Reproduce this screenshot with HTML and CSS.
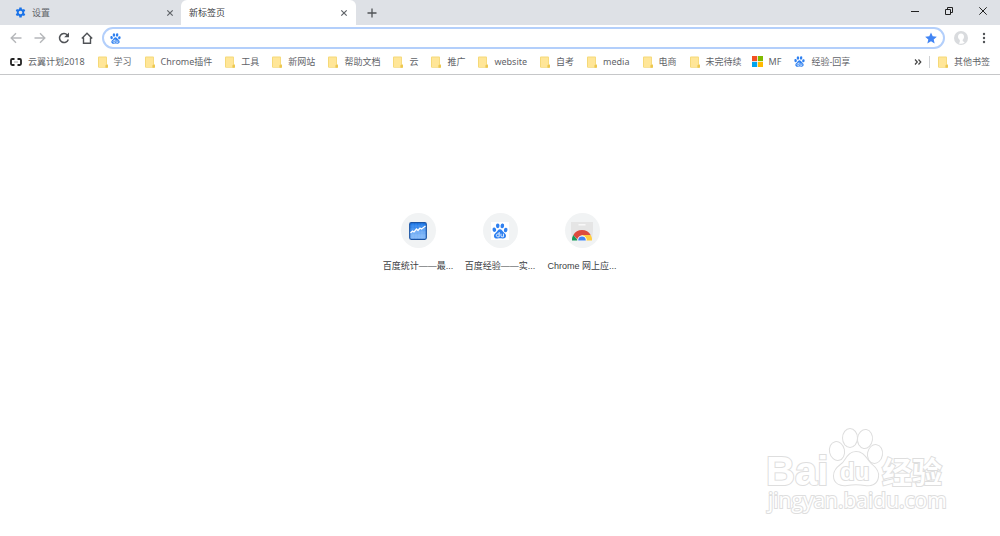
FILE: index.html
```html
<!DOCTYPE html>
<html lang="zh-CN">
<head>
<meta charset="utf-8">
<title>新标签页</title>
<link rel="stylesheet" href="styles.css">
</head>
<body>
<svg class="defs" aria-hidden="true">
  <symbol id="folder" viewBox="0 0 10 12"><path fill="#f5d978" d="M1 .5h7a1 1 0 0 1 1 1V8l1 1v2a.8.8 0 0 1-.8.8H1a1 1 0 0 1-1-1V1.500a1 1 0 0 1 1-1z"/><path fill="#ffe698" d="M1 1.500h7.200v7L7.500 9v2H1z"/><path fill="#edc750" d="M7.500 9.500 9 8.500l1 1v1.500a.8.8 0 0 1-.8.8H7.500z"/></symbol>
  <symbol id="paw" viewBox="0 0 24 24"><g fill="#2f80f0"><ellipse cx="3.500" cy="10" rx="2.700" ry="3.400" transform="rotate(-15 3.500 10)"/><ellipse cx="8.600" cy="4.300" rx="2.700" ry="3.700"/><ellipse cx="15.500" cy="4.300" rx="2.700" ry="3.700" transform="rotate(10 15.500 4.300)"/><ellipse cx="20.500" cy="10.500" rx="2.700" ry="3.400" transform="rotate(12 20.500 10.500)"/><path d="M12 9.500c2.600 0 3.500 2.600 5.400 4.400 1.800 1.700 3.800 3 3.600 5.700-.3 3-2.800 4-5.300 3.700-2.500-.4-4.700-.4-7.200 0C6 23.800 3 22.800 2.900 19.500c-.1-2.600 2-3.700 3.700-5.500C8.500 12 9.200 9.500 12 9.500z"/></g><path fill="none" stroke="#fff" stroke-width="1.300" d="M10.800 13.500v7.300H8.600c-2.800 0-2.800-4.400 0-4.400h2.200M13.500 16v3.300c0 1 .5 1.500 1.500 1.500h2.200V16"/></symbol>
  <symbol id="cross" viewBox="0 0 8 8"><path fill="none" stroke="#5f6368" stroke-width="1.200" d="m1.300 1.300 5.400 5.400m0-5.400L1.300 6.700"/></symbol>
</svg>

<header>
  <div class="tabstrip">
    <div class="tab">
      <svg class="tab-icon" viewBox="0 0 24 24"><path fill="#1a73e8" fill-rule="evenodd" d="m9.500 1-.5 3.200-1.900 1.100-3-1.200L1.600 8.400l2.500 2v3.200l-2.500 2 2.500 4.300 3-1.200L9 19.800l.5 3.200h5l.5-3.200 1.900-1.100 3 1.200 2.500-4.300-2.500-2v-3.200l2.500-2-2.500-4.300-3 1.200L15 4.200 14.500 1zM12 8a4 4 0 1 1 0 8 4 4 0 0 1 0-8z"/></svg>
      <span class="tab-title">设置</span>
      <button class="tab-close" aria-label="关闭标签页"><svg><use href="#cross"/></svg></button>
    </div>
    <div class="tab active">
      <span class="tab-title">新标签页</span>
      <button class="tab-close" aria-label="关闭标签页"><svg><use href="#cross"/></svg></button>
    </div>
    <button class="new-tab" aria-label="新建标签页"><svg viewBox="0 0 10 10"><path fill="none" stroke="#505357" stroke-width="1.300" d="M5 .5v9M.5 5h9"/></svg></button>
    <div class="window-controls">
      <button aria-label="最小化"><svg viewBox="0 0 8 8"><path stroke="#222" d="M0 4.500h8"/></svg></button>
      <button aria-label="还原"><svg viewBox="0 0 8 8"><path fill="none" stroke="#222" d="M.5 2.500h5v5h-5zM2.500 2V.5h5v5H6"/></svg></button>
      <button aria-label="关闭"><svg viewBox="0 0 8 8"><path stroke="#222" d="m.3.300 7.400 7.400m0-7.400L.3 7.700"/></svg></button>
    </div>
  </div>

  <div class="toolbar">
    <button class="tool" aria-label="后退"><svg viewBox="0 0 12 12"><path fill="none" stroke="#b5b7ba" stroke-width="1.400" d="M11.500 6H1.500M6 1.200 1.200 6 6 10.800"/></svg></button>
    <button class="tool" aria-label="前进"><svg viewBox="0 0 12 12"><path fill="none" stroke="#b5b7ba" stroke-width="1.400" d="M.5 6h10M6 1.200 10.800 6 6 10.800"/></svg></button>
    <button class="tool" aria-label="重新加载"><svg viewBox="0 0 12 12"><path fill="none" stroke="#505357" stroke-width="1.500" d="M10.300 7.500A4.500 4.500 0 1 1 9.300 2.900"/><path fill="#505357" d="M11 .5v4.800H6.200z"/></svg></button>
    <button class="tool" aria-label="主页"><svg viewBox="0 0 12 12"><path fill="none" stroke="#505357" stroke-width="1.400" d="M.8 6.500 6 1.300l5.200 5.200M2.500 5.500v5.800h7V5.500"/></svg></button>
    <form class="omnibox">
      <svg class="engine"><use href="#paw"/></svg>
      <input type="text" aria-label="地址和搜索栏">
      <button type="button" class="star" aria-label="修改书签"><svg viewBox="0 0 24 24"><path fill="#4285f4" d="m12 .8 3.400 7.700 8.300.8-6.300 5.500 1.900 8.200-7.300-4.300L4.700 23l1.900-8.200L.3 9.300l8.300-.8z"/></svg></button>
    </form>
    <button class="avatar" aria-label="用户"><svg viewBox="0 0 14 14"><circle cx="7" cy="7" r="7" fill="#d9dbde"/><path fill="#fff" d="M7 2.500c2 0 3 1.500 3 3.300 0 1.400-.6 2.300-1.300 3v1.300l2 1.300A6 6 0 0 1 7 12.800a6 6 0 0 1-2-.4l.8-1.600V8.900C4.700 8.300 4 7.200 4 5.800 4 4 5 2.500 7 2.500z"/></svg></button>
    <button class="menu" aria-label="菜单"><svg viewBox="0 0 4 12"><g fill="#505357"><circle cx="2" cy="2" r="1.200"/><circle cx="2" cy="6" r="1.200"/><circle cx="2" cy="10" r="1.200"/></g></svg></button>
  </div>

  <nav class="bookmarks" aria-label="书签栏">
    <a href="#"><svg class="link-icon" viewBox="0 0 12 8"><path fill="none" stroke="#222" stroke-width="1.800" d="M4.500 1H2.200Q1 1 1 2.200v3.600Q1 7 2.200 7h2.300M7.500 1h2.300Q11 1 11 2.200v3.600Q11 7 9.800 7H7.500"/><path stroke="#555" d="M4.500 4h1m1 0h1"/></svg>云翼计划2018</a>
    <a href="#"><svg><use href="#folder"/></svg>学习</a>
    <a href="#"><svg><use href="#folder"/></svg>Chrome插件</a>
    <a href="#"><svg><use href="#folder"/></svg>工具</a>
    <a href="#"><svg><use href="#folder"/></svg>新网站</a>
    <a href="#"><svg><use href="#folder"/></svg>帮助文档</a>
    <a href="#"><svg><use href="#folder"/></svg>云</a>
    <a href="#"><svg><use href="#folder"/></svg>推广</a>
    <a href="#"><svg><use href="#folder"/></svg>website</a>
    <a href="#"><svg><use href="#folder"/></svg>自考</a>
    <a href="#"><svg><use href="#folder"/></svg>media</a>
    <a href="#"><svg><use href="#folder"/></svg>电商</a>
    <a href="#" class="tight"><svg><use href="#folder"/></svg>未完待续</a>
    <a href="#"><svg class="wide-icon" viewBox="0 0 12 12"><path fill="#f25022" d="M0 0h5.600v5.600H0z"/><path fill="#7fba00" d="M6.400 0H12v5.600H6.400z"/><path fill="#00a4ef" d="M0 6.400h5.600V12H0z"/><path fill="#ffb900" d="M6.400 6.400H12V12H6.400z"/></svg>MF</a>
    <a href="#"><svg class="wide-icon"><use href="#paw"/></svg>经验-回享</a>
    <button class="more" aria-label="更多书签"><svg viewBox="0 0 8 6"><path fill="none" stroke="#444" stroke-width="1.200" d="m1 .5 2.300 2.500L1 5.500m3.500-5L6.800 3 4.500 5.500"/></svg></button>
    <a href="#" class="other"><svg><use href="#folder"/></svg>其他书签</a>
  </nav>
</header>

<main>
  <a class="tile" href="#">
    <span class="disc"><svg viewBox="0 0 18 18"><defs><linearGradient id="sky" x2="0" y2="1"><stop stop-color="#1976e8"/><stop offset="1" stop-color="#7ab5fa"/></linearGradient></defs><rect x=".7" y=".7" width="16.600" height="16.600" rx="1.500" fill="url(#sky)" stroke="#1c55a5" stroke-width="1.200"/><path stroke="#fff" stroke-opacity=".2" stroke-width=".5" d="M4 1v16M7 1v16M10 1v16M13 1v16M1 4h16M1 7h16M1 10h16M1 13h16"/><path fill="#fff" fill-opacity=".15" d="m1.500 11 2-2L5 10l2.500-3L9 8.500 11 6l1.500 1 4-3v12.500h-15z"/><path fill="none" stroke="#fff" stroke-width="1.300" d="m1.500 11 2-2L5 10l2.500-3L9 8.500 11 6l1.500 1 4-3"/></svg></span>
    <span class="label">百度统计——最...</span>
  </a>
  <a class="tile" href="#">
    <span class="disc"><svg viewBox="0 0 18 18"><path fill="#fff" d="M0 0h18v18H0z"/><use href="#paw" x="1" y="1" width="16" height="16"/></svg></span>
    <span class="label">百度经验——实...</span>
  </a>
  <a class="tile" href="#">
    <span class="disc"><svg class="store" viewBox="0 0 22 20"><path fill="#e5e5e5" d="M0 1h22v9l-1 9H1l-1-9z"/><path fill="#f8f8f8" d="M7.500 3h7v1.500h-7z"/><path fill="#dd4b3e" d="M2.300 14a10 10 0 0 1 17.400 0H11l-4 5z"/><path fill="#159957" d="M2.300 14 6.500 19v.5H1A10 10 0 0 1 2.300 14z"/><path fill="#ffcd40" d="M11 14h8.700a10 10 0 0 1 1.300 5.500h-6z"/><path fill="#fff" d="M6.200 19.500a4.800 5 0 0 1 9.600 0z"/><path fill="#4285f4" d="M7.200 19.500a3.800 4 0 0 1 7.600 0z"/></svg></span>
    <span class="label">Chrome 网上应...</span>
  </a>
</main>

<svg class="watermark" viewBox="0 0 184 92" role="img" aria-label="Baidu 经验">
  <g class="mark">
    <text class="brand" x="2" y="59">Bai</text>
    <ellipse cx="73" cy="25" rx="7" ry="9" transform="rotate(-12 73 25)"/>
    <ellipse cx="86" cy="12" rx="7" ry="9"/>
    <ellipse cx="101" cy="13" rx="7" ry="9" transform="rotate(8 101 13)"/>
    <ellipse cx="111" cy="28" rx="7" ry="9" transform="rotate(10 111 28)"/>
    <path d="M92 26c8 0 10 7 15 12 5 4 8 8 7 13-1 7-7 9-13 8-6-1-12-1-18 0-7 1-13-2-13-9 0-6 4-9 9-13 4-5 6-11 13-11z"/>
    <text class="du" x="76" y="54">du</text>
    <text class="exp" x="118" y="57">经验</text>
    <text class="site" x="4" y="82">jingyan.baidu.com</text>
  </g>
</svg>
</body>
</html>
```
FILE: styles.css
```css
* { box-sizing: border-box; }

body {
  margin: 0;
  min-height: 100vh;
  background: #fff;
  color: #5f6368;
  font: 9px/12px "Noto Sans", "Noto Sans CJK SC", sans-serif;
}

button {
  display: flex;
  align-items: center;
  justify-content: center;
  padding: 0;
  border: 0;
  background: none;
}

a { color: inherit; text-decoration: none; }
svg { display: block; flex: none; }
.defs { position: absolute; width: 0; height: 0; }

.tabstrip {
  display: flex;
  height: 25px;
  background: #dee1e6;
}

.tab {
  display: flex;
  align-items: center;
  flex: 0 1 181px;
  gap: 6px;
  padding: 0 6px 0 15px;
}

.tab.active {
  flex-basis: 175px;
  padding: 0 7px 0 8px;
  border-radius: 6px 6px 0 0;
  background: #fff;
  color: #3c4043;
}

.tab-icon { width: 11px; height: 11px; }
.tab-title { flex: 1; }
.tab-close svg { width: 8px; height: 8px; }
.tab-close { width: 10px; height: 12px; }
.new-tab { width: 32px; }
.new-tab svg { width: 10px; height: 10px; }

.window-controls {
  display: flex;
  height: 21px;
  margin-left: auto;
}

.window-controls button { width: 34px; }
.window-controls svg { width: 8px; height: 8px; }

.toolbar {
  display: flex;
  align-items: center;
  height: 26px;
  padding: 0 10px 0 4px;
}

.tool { width: 24px; height: 24px; }
.tool:nth-child(n+3) { width: 23px; }
.tool svg { width: 12px; height: 12px; }

.omnibox {
  display: flex;
  align-items: center;
  flex: 1;
  height: 22px;
  margin-left: 4px;
  padding: 0 6px;
  border: 2px solid #b3cffb;
  border-radius: 11px;
}

.engine { width: 11px; height: 11px; }

.omnibox input {
  flex: 1;
  min-width: 0;
  height: 16px;
  padding: 0 6px;
  border: 0;
  outline: 0;
  background: none;
  font: inherit;
}

.star svg { width: 12px; height: 12px; }
.avatar { margin-left: 9px; }
.avatar svg { width: 14px; height: 14px; }
.menu { width: 12px; margin-left: 10px; }
.menu svg { width: 4px; height: 12px; }

.bookmarks {
  display: flex;
  align-items: center;
  gap: 13px;
  height: 24px;
  padding: 0 10px 2px;
  border-bottom: 1px solid #c6c7c9;
  white-space: nowrap;
}

.bookmarks a {
  display: flex;
  align-items: center;
  gap: 6px;
}

.bookmarks svg { width: 10px; height: 12px; }
.bookmarks .link-icon { width: 12px; height: 8px; }
.bookmarks .wide-icon { width: 11px; height: 11px; }
.bookmarks .tight { margin-right: -3px; }
.bookmarks .more { margin-left: auto; margin-right: -6px; }
.bookmarks .more svg { width: 8px; height: 6px; }

.bookmarks .other {
  padding-left: 8px;
  border-left: 1px solid #d0d2d5;
}

main {
  display: flex;
  justify-content: center;
  gap: 8px;
  padding-top: 138px;
}

.tile {
  display: flex;
  flex-direction: column;
  align-items: center;
  gap: 12px;
  width: 74px;
  color: #3c4043;
  font-family: "Liberation Sans", "Noto Sans CJK SC", sans-serif;
  white-space: nowrap;
}

.disc {
  display: flex;
  align-items: center;
  justify-content: center;
  width: 35px;
  height: 35px;
  border-radius: 50%;
  background: #f1f3f4;
}

.disc svg { width: 18px; height: 18px; }
.disc .store { width: 22px; height: 20px; }

.watermark {
  position: absolute;
  right: 52px;
  bottom: 18px;
  width: 184px;
  height: 92px;
}

.mark {
  fill: #fff;
  stroke: #dedede;
  stroke-width: 2px;
  font-family: "Liberation Sans", "Noto Sans CJK SC", sans-serif;
  font-weight: bold;
  paint-order: stroke;
}

.brand { font-size: 40px; }
.du { font-size: 24px; }
.exp { font-size: 30px; }

.site {
  font: 21px "Open Sans", sans-serif;
}
```
